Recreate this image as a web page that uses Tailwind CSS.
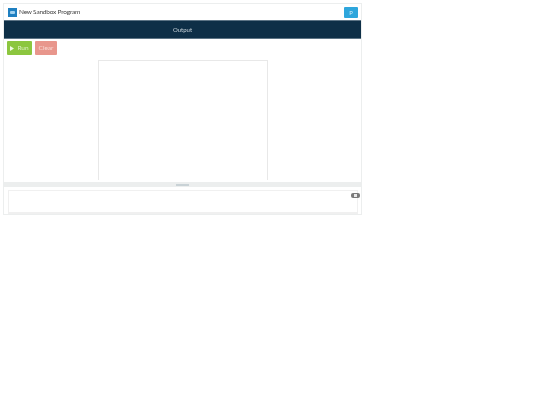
<!DOCTYPE html>
<html lang="en">
<head>
  <meta charset="UTF-8">
  <title>New Sandbox Program</title>
  <script src="https://cdn.jsdelivr.net/npm/@tailwindcss/browser@4"></script>
</head>
<body class="bg-white font-['Lato',sans-serif]">
  <div class="pt-[3px] pl-[3px] w-[362px]">
    <div class="border border-[#eceeee] h-[212px] flex flex-col will-change-transform">

      <!-- title bar -->
      <div class="h-4 shrink-0 flex items-center justify-between pl-1 pr-[3px]">
        <div class="flex items-center gap-[2px]">
          <div class="w-[9px] h-[9px] bg-[#1f7fc0] flex items-center justify-center">
            <div class="w-[5px] h-[3px] bg-[#9fd0ef] rounded-[1px]"></div>
          </div>
          <span class="text-[6.5px] tracking-[-0.2px] leading-none text-[#444]">New Sandbox Program</span>
        </div>
        <div class="w-[14px] h-[11px] bg-[#2ea6dc] rounded-[1px] flex items-center justify-center text-[6px] text-[#cfeaf7]">P</div>
      </div>

      <!-- output bar -->
      <div class="h-[19px] shrink-0 bg-[#0e2f47] border-y border-[#5d7485] flex items-center justify-center">
        <span class="text-[6px] leading-none text-[#c9d3da]">Output</span>
      </div>

      <!-- buttons -->
      <div class="flex gap-[3px] pl-[3px] pt-[2px] h-[21px] shrink-0">
        <button class="w-[25px] h-[14px] bg-[#8cc63f] rounded-[1px] flex items-center justify-center gap-[3px] text-[6.5px] text-[#dcefc0]">
          <svg width="4" height="5" viewBox="0 0 4 5"><path d="M0 0L4 2.5L0 5Z" fill="#f2fae6"/></svg>
          <span>Run</span>
        </button>
        <button class="w-[22px] h-[14px] bg-[#e8968c] rounded-[1px] flex items-center justify-center text-[6.5px] text-[#f8d8d3]">Clear</button>
      </div>

      <!-- canvas -->
      <div class="h-[120px] shrink-0 flex justify-center pl-px">
        <div class="w-[170px] h-[120px] border-x border-t border-[#e8e8e8] bg-white"></div>
      </div>

      <!-- splitter -->
      <div class="h-[5px] mt-[2px] shrink-0 bg-[#eceeee] flex items-center justify-center">
        <div class="w-[13px] h-[2px] bg-[#c9d2d6]"></div>
      </div>

      <!-- console -->
      <div class="relative flex-1 pl-1 pr-[3px] pt-[3px]">
        <div class="h-full border border-b-2 border-[#f0f0f0]"></div>
        <div class="absolute right-px top-[6px] w-[9px] h-[5px] bg-[#7a7a7a] rounded-[2px] flex items-center justify-center">
          <div class="w-[3px] h-[3px] bg-[#e8e8e8]"></div>
        </div>
      </div>

    </div>
  </div>
</body>
</html>
